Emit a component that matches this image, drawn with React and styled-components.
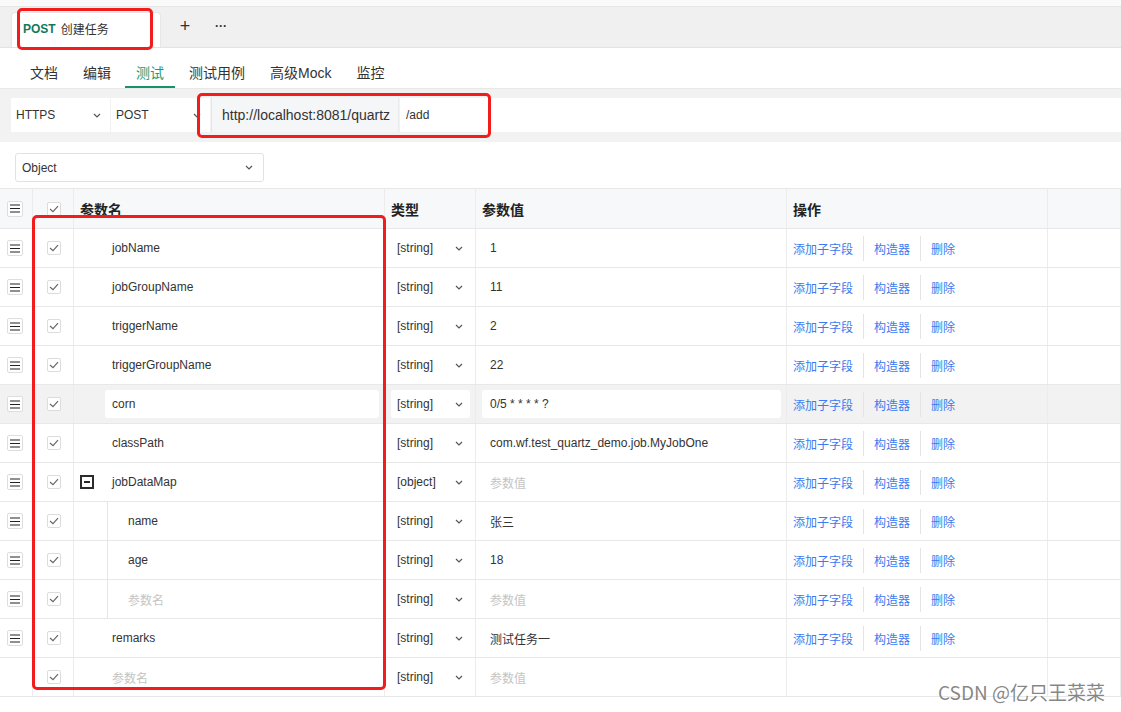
import React from 'react';
import styled, { createGlobalStyle, css } from 'styled-components';

const GlobalStyle = createGlobalStyle`
  * { box-sizing: border-box; }
  body {
    margin: 0;
    font-family: "Liberation Sans", "Noto Sans CJK SC", sans-serif;
    color: #333;
    background: #fff;
  }
`;

const navItems = ['文档', '编辑', '测试', '测试用例', '高级Mock', '监控'];

const params = [
  { name: 'jobName', type: 'string', value: '1' },
  { name: 'jobGroupName', type: 'string', value: '11' },
  { name: 'triggerName', type: 'string', value: '2' },
  { name: 'triggerGroupName', type: 'string', value: '22' },
  { name: 'corn', type: 'string', value: '0/5 * * * * ?', editing: true },
  { name: 'classPath', type: 'string', value: 'com.wf.test_quartz_demo.job.MyJobOne' },
  { name: 'jobDataMap', type: 'object', value: '', expanded: true },
  { name: 'name', type: 'string', value: '张三', level: 1 },
  { name: 'age', type: 'string', value: '18', level: 1 },
  { name: '', type: 'string', value: '', level: 1 },
  { name: 'remarks', type: 'string', value: '测试任务一' },
  { name: '', type: 'string', value: '', blank: true },
];

const COLS = '33px 41px 311px 91px 311px 261px 1fr';

const Chevron = () => (
  <svg width="8" height="5" viewBox="0 0 8 5">
    <path d="M1 1l3 3 3-3" fill="none" stroke="#555" strokeWidth="1.2" />
  </svg>
);

const Check = () => (
  <svg width="10" height="8" viewBox="0 0 10 8">
    <path d="M1 4l3 2.6L9 1.2" fill="none" stroke="#666" strokeWidth="1.2" />
  </svg>
);

const Lines = () => (
  <svg width="10" height="9" viewBox="0 0 10 9">
    <path d="M0 1h10M0 4.5h10M0 8h10" stroke="#222" strokeWidth="1.2" />
  </svg>
);

export default function App() {
  return (
    <Page>
      <GlobalStyle />
      <TopStrip />
      <TabBar>
        <Tab>
          <Method>POST</Method>
          <TabTitle>创建任务</TabTitle>
        </Tab>
        <BarIcon $first>+</BarIcon>
        <BarIcon>···</BarIcon>
      </TabBar>

      <Nav>
        {navItems.map((item) => (
          <NavItem key={item} $active={item === '测试'}>{item}</NavItem>
        ))}
      </Nav>

      <UrlArea>
        <Select $width={99}>
          HTTPS
          <Chevron />
        </Select>
        <Select $width={99}>
          POST
          <Chevron />
        </Select>
        <UrlPrefix>http://localhost:8081/quartz</UrlPrefix>
        <PathInput>/add</PathInput>
      </UrlArea>

      <ObjectArea>
        <ObjectSelect>
          Object
          <Chevron />
        </ObjectSelect>
      </ObjectArea>

      <Table>
        <HeadRow>
          <HeadCell>
            <Handle><Lines /></Handle>
          </HeadCell>
          <HeadCell $center>
            <Box><Check /></Box>
          </HeadCell>
          <HeadCell>参数名</HeadCell>
          <HeadCell>类型</HeadCell>
          <HeadCell>参数值</HeadCell>
          <HeadCell>操作</HeadCell>
          <HeadCell />
        </HeadRow>

        {params.map((p, i) => (
          <Row key={i} $editing={p.editing}>
            <Cell>{!p.blank && <Handle><Lines /></Handle>}</Cell>
            <Cell $center>
              <Box><Check /></Box>
            </Cell>
            <NameCell>
              <ToggleSlot>{p.expanded && <Minus />}</ToggleSlot>
              {p.level ? (
                <Indent>
                  <NameText $placeholder={!p.name}>{p.name || '参数名'}</NameText>
                </Indent>
              ) : (
                <NameBox $editing={p.editing}>
                  <NameText $placeholder={!p.name}>{p.name || '参数名'}</NameText>
                </NameBox>
              )}
            </NameCell>
            <EditCell>
              <TypeBox $editing={p.editing}>
                [{p.type}]
                <Chevron />
              </TypeBox>
            </EditCell>
            <EditCell>
              <ValueBox $editing={p.editing} $placeholder={!p.value}>
                {p.value || '参数值'}
              </ValueBox>
            </EditCell>
            <ActionCell>
              {!p.blank && (
                <>
                  <Link>添加子字段</Link>
                  <Sep />
                  <Link>构造器</Link>
                  <Sep />
                  <Link>删除</Link>
                </>
              )}
            </ActionCell>
            <Cell />
          </Row>
        ))}
      </Table>

      <Mark style={{ left: 17, top: 8, width: 136, height: 42 }} />
      <Mark style={{ left: 197, top: 93, width: 294, height: 45 }} />
      <Mark style={{ left: 32, top: 215, width: 354, height: 475 }} />
      <Watermark>CSDN @亿只王菜菜</Watermark>
    </Page>
  );
}

const Page = styled.div`
  position: relative;
  width: 1121px;
  height: 712px;
  overflow: hidden;
  background: #fff;
`;

const TopStrip = styled.div`
  height: 7px;
  background: #fafafa;
  border-bottom: 1px solid #e6e6e6;
`;

const TabBar = styled.div`
  height: 41px;
  display: flex;
  align-items: flex-end;
  padding-left: 11px;
  background: #f0f0f0;
  border-bottom: 1px solid #e3e3e3;
`;

const Tab = styled.div`
  width: 150px;
  height: 35px;
  display: flex;
  align-items: center;
  padding: 0 0 3px 11px;
  background: #fff;
  border: 1px solid #e6e6e6;
  border-bottom: 0;
  border-radius: 4px 4px 0 0;
  font-size: 12px;
`;

const Method = styled.span`
  color: #12795a;
  font-weight: 700;
`;

const TabTitle = styled.span`
  margin-left: 5px;
  color: #333;
`;

const BarIcon = styled.span`
  align-self: center;
  margin-left: ${(p) => (p.$first ? '17px' : '22px')};
  width: 14px;
  text-align: center;
  font-size: ${(p) => (p.$first ? '18px' : '12px')};
  font-weight: ${(p) => (p.$first ? 400 : 700)};
  color: #333;
  line-height: 1;
  margin-top: -2px;
`;

const Nav = styled.div`
  height: 41px;
  display: flex;
  gap: 3px;
  padding-left: 19px;
  border-bottom: 1px solid #e8e8e8;
`;

const NavItem = styled.div`
  padding: 9px 11px 0;
  display: flex;
  align-items: center;
  font-size: 14px;
  color: #333;
  border-bottom: 2px solid transparent;
  ${(p) =>
    p.$active &&
    css`
      color: #1a9d76;
      border-bottom-color: #14936c;
    `}
`;

const UrlArea = styled.div`
  display: flex;
  gap: 1px;
  padding: 9px 0 10px 11px;
  background: #f2f2f2;
`;

const Select = styled.div`
  width: ${(p) => p.$width}px;
  height: 34px;
  display: flex;
  align-items: center;
  justify-content: space-between;
  padding: 0 9px 0 5px;
  background: #fff;
  font-size: 12px;
  color: #333;
`;

const UrlPrefix = styled.div`
  width: 188px;
  height: 34px;
  display: flex;
  align-items: center;
  padding-left: 10px;
  background: #f5f6f8;
  border-left: 1px solid #e6e6e6;
  border-right: 1px solid #ececec;
  font-size: 14px;
  color: #333;
`;

const PathInput = styled.div`
  flex: 1;
  height: 34px;
  display: flex;
  align-items: center;
  padding-left: 6px;
  background: #fff;
  font-size: 12px;
  color: #333;
`;

const ObjectArea = styled.div`
  padding: 11px 15px 6px;
`;

const ObjectSelect = styled.div`
  width: 249px;
  height: 29px;
  display: flex;
  align-items: center;
  justify-content: space-between;
  padding: 0 10px 0 6px;
  border: 1px solid #e2e2e2;
  border-radius: 3px;
  font-size: 12px;
  color: #333;
`;

const Table = styled.div`
  border-top: 1px solid #e8e8e8;
`;

const HeadRow = styled.div`
  display: grid;
  grid-template-columns: ${COLS};
  height: 40px;
  background: #f7f8fa;
  border-bottom: 1px solid #e8e8e8;
`;

const HeadCell = styled.div`
  display: flex;
  align-items: center;
  padding-left: ${(p) => (p.$center ? '14px' : '6px')};
  border-right: 1px solid #ececec;
  font-size: 14px;
  font-weight: 700;
  color: #222;
  &:first-child { padding-left: 7px; }
`;

const Row = styled.div`
  display: grid;
  grid-template-columns: ${COLS};
  height: 39px;
  border-bottom: 1px solid #e8e8e8;
  background: ${(p) => (p.$editing ? '#f2f2f2' : '#fff')};
`;

const Cell = styled.div`
  display: flex;
  align-items: center;
  padding-left: ${(p) => (p.$center ? '14px' : '7px')};
  border-right: 1px solid #ececec;
`;

const Handle = styled.span`
  width: 16px;
  height: 16px;
  display: flex;
  align-items: center;
  justify-content: center;
  border: 1px solid #dedede;
  border-radius: 2px;
  background: #fff;
`;

const Box = styled.span`
  width: 14px;
  height: 14px;
  display: flex;
  align-items: center;
  justify-content: center;
  border: 1px solid #dcdcdc;
  border-radius: 2px;
  background: #fff;
`;

const NameCell = styled.div`
  display: flex;
  align-items: stretch;
  padding: 0 5px 0 6px;
  border-right: 1px solid #ececec;
`;

const ToggleSlot = styled.div`
  width: 25px;
  display: flex;
  align-items: center;
`;

const Minus = styled.span`
  width: 14px;
  height: 14px;
  border: 2px solid #2b2b2b;
  position: relative;
  &::after {
    content: '';
    position: absolute;
    left: 2px;
    right: 2px;
    top: 4px;
    height: 2px;
    background: #2b2b2b;
  }
`;

const NameBox = styled.div`
  flex: 1;
  display: flex;
  align-items: center;
  padding-left: 7px;
  ${(p) =>
    p.$editing &&
    css`
      margin: 5px 0 5px;
      background: #fff;
      border-radius: 3px;
    `}
`;

const Indent = styled.div`
  flex: 1;
  display: flex;
  align-items: center;
  margin-left: 2px;
  padding-left: 20px;
  border-left: 1px solid #e6e6e6;
`;

const NameText = styled.span`
  font-size: 12px;
  color: ${(p) => (p.$placeholder ? '#c4c4c4' : '#333')};
`;

const EditCell = styled.div`
  display: flex;
  align-items: stretch;
  padding: 5px 5px 5px 6px;
  border-right: 1px solid #ececec;
`;

const TypeBox = styled.div`
  flex: 1;
  display: flex;
  align-items: center;
  justify-content: space-between;
  padding: 0 7px 0 6px;
  font-size: 12px;
  color: #333;
  border-radius: 3px;
  background: ${(p) => (p.$editing ? '#fff' : 'transparent')};
`;

const ValueBox = styled.div`
  flex: 1;
  display: flex;
  align-items: center;
  padding-left: 8px;
  font-size: 12px;
  color: ${(p) => (p.$placeholder ? '#c4c4c4' : '#333')};
  border-radius: 3px;
  background: ${(p) => (p.$editing ? '#fff' : 'transparent')};
`;

const ActionCell = styled.div`
  display: flex;
  align-items: center;
  padding-left: 6px;
  border-right: 1px solid #ececec;
`;

const Link = styled.span`
  font-size: 12px;
  color: #3b7af0;
`;

const Sep = styled.span`
  width: 1px;
  height: 25px;
  margin: 0 10px;
  background: #e4e4e4;
`;

const Mark = styled.div`
  position: absolute;
  border: 3px solid #f21c1c;
  border-radius: 5px;
  pointer-events: none;
`;

const Watermark = styled.div`
  position: absolute;
  right: 16px;
  top: 682px;
  font-family: "Noto Sans CJK SC", "Liberation Sans", sans-serif;
  font-size: 19px;
  line-height: 1;
  color: rgba(80, 80, 80, 0.7);
  text-shadow: 0 0 1px rgba(255, 255, 255, 0.8);
`;
